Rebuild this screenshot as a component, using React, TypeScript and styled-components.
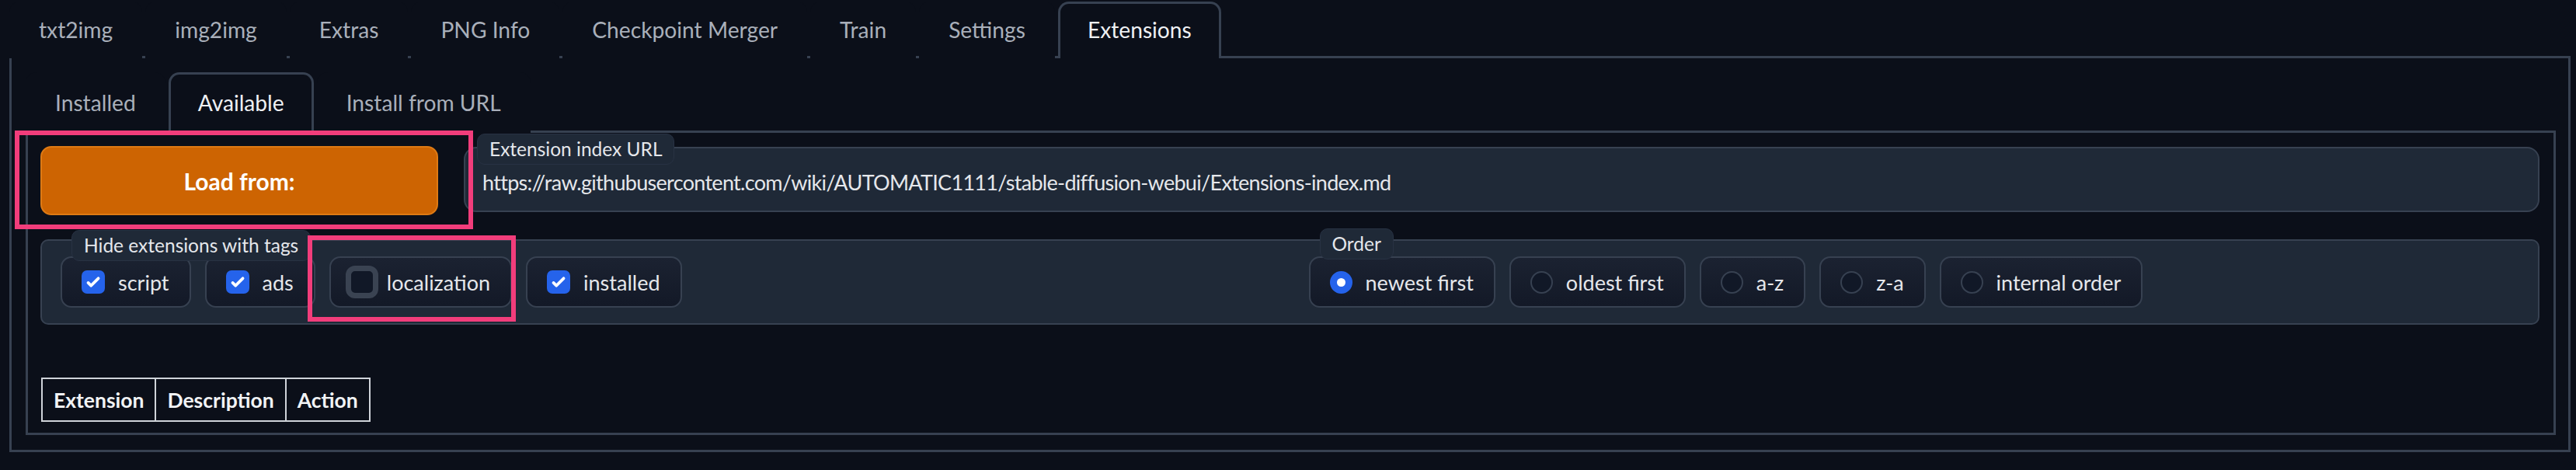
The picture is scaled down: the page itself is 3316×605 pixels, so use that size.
import React from "react";
import styled, { createGlobalStyle } from "styled-components";

const GlobalStyle = createGlobalStyle`
  html, body {
    margin: 0;
    background: #0b0f19;
  }
  body {
    font-family: Lato, "Noto Sans", sans-serif;
    color: #e5e7eb;
  }
  * {
    box-sizing: border-box;
  }
`;

const Page = styled.div`
  padding: 0 7px 0 12px;
`;

const TabNav = styled.nav`
  display: flex;
  align-items: flex-end;
  gap: 4px;
  height: ${(p: { $h: number }) => p.$h}px;
`;

const TabButton = styled.div<{ $active?: boolean; $h: number }>`
  position: relative;
  z-index: 1;
  display: flex;
  align-items: center;
  height: ${(p) => p.$h}px;
  margin-bottom: -3px;
  padding: 0 35px 4px;
  font-size: 28.2px;
  color: ${(p) => (p.$active ? "#eef0f3" : "#a9afba")};
  background: #0b0f19;
  border: 3px solid ${(p) => (p.$active ? "#374151" : "transparent")};
  border-bottom: none;
  border-radius: 14px 14px 0 0;
  white-space: nowrap;
`;

const OuterPanel = styled.section`
  border: 3px solid #374151;
  padding: 18px 16px 19px 18px;
`;

const InnerPanel = styled.div`
  display: flex;
  flex-direction: column;
  gap: 31px;
  border: 3px solid #374151;
  padding: 17px 18px 14px 16px;
`;

const TopRow = styled.div`
  display: flex;
  align-items: flex-start;
  gap: 33px;
`;

const LoadCol = styled.div`
  position: relative;
  width: 512px;
  flex: none;
`;

const LoadButton = styled.button`
  width: 100%;
  height: 89px;
  background: #cd6402;
  border: 2px solid #de7a14;
  border-radius: 14px;
  color: #fff;
  font-family: Lato, "Noto Sans", sans-serif;
  font-weight: 700;
  font-size: 30px;
`;

const Field = styled.div`
  position: relative;
  flex: 1;
  margin-top: 1px;
`;

const FloatLabel = styled.span<{ $left: number; $top: number }>`
  position: absolute;
  z-index: 2;
  left: ${(p) => p.$left}px;
  top: ${(p) => p.$top}px;
  height: 40px;
  display: flex;
  align-items: center;
  padding: 0 15px 2px;
  background: #1f2937;
  border: 1px solid #283243;
  border-radius: 10px;
  font-size: 24.5px;
  color: #e5e7eb;
  white-space: nowrap;
`;

const TextInput = styled.div`
  height: 84px;
  display: flex;
  align-items: center;
  padding: 6px 22px 0;
  background: #1f2937;
  border: 2px solid #374151;
  border-radius: 16px;
  font-size: 27px;
  letter-spacing: -0.7px;
  color: #e5e7eb;
`;

const FilterBox = styled.div`
  display: grid;
  grid-template-columns: 1fr 1fr;
  height: 110px;
  background: #1f2937;
  border: 2px solid #374151;
  border-radius: 10px;
`;

const Group = styled.div`
  position: relative;
  display: flex;
  align-items: center;
  gap: 18px;
  padding-left: 24px;
`;

const Pill = styled.label`
  position: relative;
  display: flex;
  align-items: center;
  gap: 17px;
  height: 66px;
  padding: 0 26px 0 25px;
  background: linear-gradient(to top, #131927, #1b2231);
  border: 2px solid #374151;
  border-radius: 14px;
  font-size: 27px;
  color: #e5e7eb;
  white-space: nowrap;
`;

const CheckBox = styled.span<{ $checked: boolean }>`
  display: flex;
  align-items: center;
  justify-content: center;
  flex: none;
  width: ${(p) => (p.$checked ? 30 : 42)}px;
  height: ${(p) => (p.$checked ? 30 : 42)}px;
  margin: ${(p) => (p.$checked ? "0" : "0 -6px")};
  background: ${(p) => (p.$checked ? "#2563eb" : "#111827")};
  border: ${(p) => (p.$checked ? "none" : "7px solid #3a4352")};
  border-radius: ${(p) => (p.$checked ? 7 : 12)}px;
`;

const RadioDot = styled.span<{ $checked: boolean }>`
  display: flex;
  align-items: center;
  justify-content: center;
  flex: none;
  width: 29px;
  height: 29px;
  border-radius: 50%;
  background: ${(p) => (p.$checked ? "#2563eb" : "#111827")};
  border: 2px solid ${(p) => (p.$checked ? "#2563eb" : "#374151")};

  &::after {
    content: "";
    display: ${(p) => (p.$checked ? "block" : "none")};
    width: 11px;
    height: 11px;
    border-radius: 50%;
    background: #fff;
  }
`;

const Highlight = styled.span<{ $t: number; $r: number; $b: number; $l: number }>`
  position: absolute;
  z-index: 5;
  top: ${(p) => p.$t}px;
  right: ${(p) => p.$r}px;
  bottom: ${(p) => p.$b}px;
  left: ${(p) => p.$l}px;
  border: 6px solid #f23d7b;
  pointer-events: none;
`;

const Table = styled.table`
  align-self: flex-start;
  margin: 37px 0 0 1px;
  border-collapse: collapse;
  border: 2px solid #cfd3d9;

  th {
    height: 55px;
    padding: 0 14px;
    border: 2px solid #cfd3d9;
    font-size: 26.5px;
    font-weight: 700;
    color: #f1f3f5;
    text-align: left;
  }
`;

const mainTabs = [
  "txt2img",
  "img2img",
  "Extras",
  "PNG Info",
  "Checkpoint Merger",
  "Train",
  "Settings",
  "Extensions",
];
const subTabs = ["Installed", "Available", "Install from URL"];
const tags = [
  { name: "script", checked: true },
  { name: "ads", checked: true },
  { name: "localization", checked: false, marked: true },
  { name: "installed", checked: true },
];
const orders = ["newest first", "oldest first", "a-z", "z-a", "internal order"];

function CheckMark() {
  return (
    <svg width="30" height="30" viewBox="0 0 16 16" fill="#fff">
      <path d="M12.207 4.793a1 1 0 010 1.414l-5 5a1 1 0 01-1.414 0l-2-2a1 1 0 011.414-1.414L6.5 9.086l4.293-4.293a1 1 0 011.414 0z" />
    </svg>
  );
}

export default function App() {
  return (
    <>
      <GlobalStyle />
      <Page>
        <TabNav $h={72}>
          {mainTabs.map((t) => (
            <TabButton key={t} $h={73} $active={t === "Extensions"}>
              {t}
            </TabButton>
          ))}
        </TabNav>

        <OuterPanel>
          <TabNav $h={75}>
            {subTabs.map((t) => (
              <TabButton key={t} $h={78} $active={t === "Available"}>
                {t}
              </TabButton>
            ))}
          </TabNav>

          <InnerPanel>
            <TopRow>
              <LoadCol>
                <LoadButton>Load from:</LoadButton>
                <Highlight $t={-20} $r={-45} $b={-18} $l={-33} />
              </LoadCol>
              <Field>
                <FloatLabel $left={17} $top={-17}>
                  Extension index URL
                </FloatLabel>
                <TextInput>
                  https://raw.githubusercontent.com/wiki/AUTOMATIC1111/stable-diffusion-webui/Extensions-index.md
                </TextInput>
              </Field>
            </TopRow>

            <FilterBox>
              <Group>
                <FloatLabel $left={38} $top={-14}>
                  Hide extensions with tags
                </FloatLabel>
                {tags.map((t) => (
                  <Pill key={t.name}>
                    <CheckBox $checked={t.checked}>
                      {t.checked && <CheckMark />}
                    </CheckBox>
                    {t.name}
                    {t.marked && <Highlight $t={-29} $r={-7} $b={-20} $l={-30} />}
                  </Pill>
                ))}
              </Group>
              <Group>
                <FloatLabel $left={38} $top={-16}>
                  Order
                </FloatLabel>
                {orders.map((o, i) => (
                  <Pill key={o}>
                    <RadioDot $checked={i === 0} />
                    {o}
                  </Pill>
                ))}
              </Group>
            </FilterBox>

            <Table>
              <thead>
                <tr>
                  <th>Extension</th>
                  <th>Description</th>
                  <th>Action</th>
                </tr>
              </thead>
            </Table>
          </InnerPanel>
        </OuterPanel>
      </Page>
    </>
  );
}
